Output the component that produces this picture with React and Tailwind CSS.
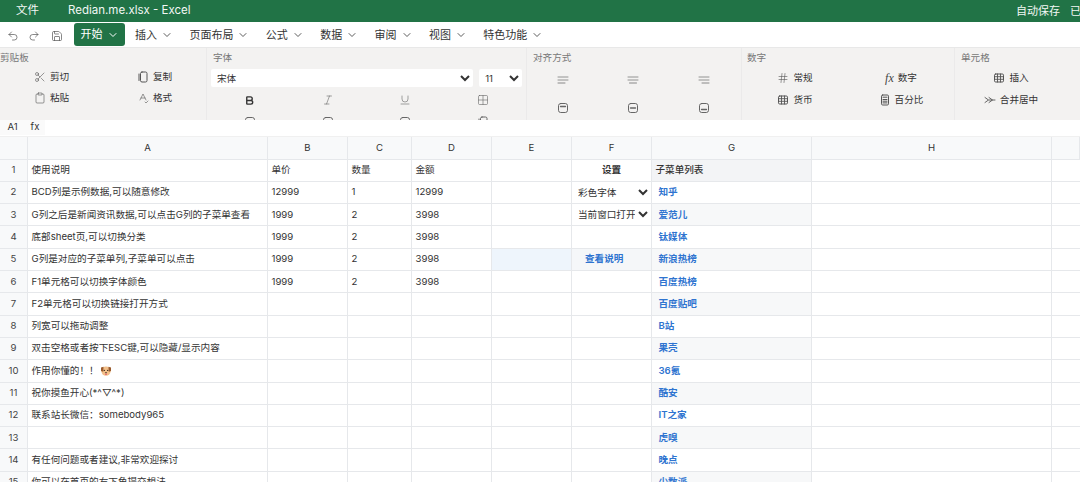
import React from 'react';
import {
  Undo2, Redo2, Save, ChevronDown, Scissors, Clipboard, Bold, Italic, Underline, Grid2x2,
  Hash, SpellCheck,
} from 'lucide-react';

const FONT = "font-['Inter','Noto_Sans_CJK_SC',sans-serif]";

const menus = ['插入', '页面布局', '公式', '数据', '审阅', '视图', '特色功能'];
const columns = ['A', 'B', 'C', 'D', 'E', 'F', 'G', 'H', ''];

const rows = [
  ['使用说明', '单价', '数量', '金额', '', '设置', '子菜单列表'],
  ['BCD列是示例数据,可以随意修改', '12999', '1', '12999', '', 'select1', '知乎'],
  ['G列之后是新闻资讯数据,可以点击G列的子菜单查看', '1999', '2', '3998', '', 'select2', '爱范儿'],
  ['底部sheet页,可以切换分类', '1999', '2', '3998', '', '', '钛媒体'],
  ['G列是对应的子菜单列,子菜单可以点击', '1999', '2', '3998', '', '查看说明', '新浪热榜'],
  ['F1单元格可以切换字体颜色', '1999', '2', '3998', '', '', '百度热榜'],
  ['F2单元格可以切换链接打开方式', '', '', '', '', '', '百度贴吧'],
  ['列宽可以拖动调整', '', '', '', '', '', 'B站'],
  ['双击空格或者按下ESC键,可以隐藏/显示内容', '', '', '', '', '', '果壳'],
  ['作用你懂的！！', '', '', '', '', '', '36氪'],
  ['祝你摸鱼开心(*^▽^*)', '', '', '', '', '', '酷安'],
  ['联系站长微信：somebody965', '', '', '', '', '', 'IT之家'],
  ['', '', '', '', '', '', '虎嗅'],
  ['有任何问题或者建议,非常欢迎探讨', '', '', '', '', '', '晚点'],
  ['你可以在首页的右下角提交想法', '', '', '', '', '', '少数派'],
];

const DogFace = () => (
  <svg width="12" height="12" viewBox="0 0 12 12" className="ml-[1px] inline-block align-[-2px]">
    <circle cx="6" cy="6.2" r="4.6" fill="#f3c08a" />
    <path d="M1 2.5 L3.6 1.8 L3.2 6.8 L1 6 Z M11 2.5 L8.4 1.8 L8.8 6.8 L11 6 Z" fill="#9a5a2c" />
    <circle cx="4.3" cy="5.4" r="0.7" fill="#3a2a20" />
    <circle cx="7.7" cy="5.4" r="0.7" fill="#3a2a20" />
    <path d="M4.8 7.2 H7.2 L6 8.4 Z" fill="#3a2a20" />
    <path d="M5.3 8.6 H6.7 V10 H5.3 Z" fill="#e0566a" />
  </svg>
);

const Svg = ({ children, size = 12 }) => (
  <svg width={size} height={size} viewBox="0 0 12 12" fill="none" stroke="currentColor" strokeWidth="1" strokeLinecap="round">
    {children}
  </svg>
);

const CopyIcon = () => (
  <Svg>
    <rect x="3.5" y="1" width="6.5" height="10" rx="1.5" />
    <path d="M2 3 V9.5" />
  </Svg>
);

const PasteIcon = () => <Clipboard size={12} strokeWidth={1.2} />;

const GridIcon = () => (
  <Svg>
    <rect x="1.5" y="2" width="9" height="8" rx="1.2" />
    <path d="M1.5 4.7 H10.5 M1.5 7.3 H10.5 M4.5 2 V10 M7.5 2 V10" strokeWidth="0.9" />
  </Svg>
);

const CalcIcon = () => (
  <Svg>
    <rect x="2.5" y="1" width="7" height="10" rx="1.2" />
    <path d="M4 3.2 H8 M4 5.5 H8 M4 7.2 H8 M4 8.9 H8" strokeWidth="1" />
  </Svg>
);

const MergeIcon = () => (
  <Svg>
    <path d="M1 3.5 L4.5 6 L1 8.5 M5 3.5 L8.5 6 L5 8.5 M5 6 H11" strokeWidth="0.9" />
  </Svg>
);

const FxIcon = () => (
  <span className="font-['Liberation_Serif',serif] text-[12px] italic leading-none text-[#444]">fx</span>
);

// three lines, pos picks the alignment
const AlignIcon = ({ pos }) => {
  const x = pos === 'left' ? 1 : pos === 'center' ? 2.5 : 4;
  return (
    <span className="text-[#888]">
      <Svg>
        <path d="M1 3 H11" strokeWidth="0.9" />
        <path d="M1 6 H11" strokeWidth="0.9" />
        <path d={`M${x} 9 H${x + 7}`} />
      </Svg>
    </span>
  );
};

const BoxIcon = ({ y }) => (
  <Svg>
    <rect x="1.5" y="1.5" width="9" height="9" rx="2.2" />
    <path d={`M3.5 ${y} H8.5`} strokeWidth="1.3" />
  </Svg>
);

const RibbonButton = ({ icon: Icon, label }) => (
  <div className="flex items-center justify-center gap-[4px] text-[9.6px] text-[#333]">
    <span className="flex items-center text-[#555]">
      <Icon />
    </span>
    <span>{label}</span>
  </div>
);

const RibbonIcon = ({ children }) => (
  <div className="flex items-center justify-center text-[#666]">{children}</div>
);

const Section = ({ title, width, children, last }) => (
  <div className={`flex shrink-0 flex-col ${width} ${last ? '' : 'border-r border-[#ebeaea]'}`}>
    <div className="h-[19px] pt-[3px] text-[9.6px] leading-[14px] text-[#777]">{title}</div>
    {children}
  </div>
);

const Cell = ({ value, row, col }) => {
  const base = 'flex items-center overflow-hidden whitespace-nowrap border-r border-b border-[#e6e8eb] text-[9.6px]';
  if (col === 5 && (value === 'select1' || value === 'select2')) {
    const label = value === 'select1' ? '彩色字体' : '当前窗口打开';
    return (
      <div className={base}>
        <select defaultValue={label} className="h-full w-full bg-white pl-[2px] text-[9.6px] text-[#333] outline-none">
          <option>{label}</option>
        </select>
      </div>
    );
  }
  if (col === 5 && row === 0) {
    return <div className={`${base} justify-center font-semibold text-[#333]`}>{value}</div>;
  }
  if (col === 5 && row === 4) {
    return <div className={`${base} bg-[#f5f7f9] pl-[13px] font-semibold text-[#2f74d0]`}>{value}</div>;
  }
  if (col === 6 && row === 0) {
    return <div className={`${base} bg-[#f3f4f6] px-[3.5px] font-medium text-[#333]`}>{value}</div>;
  }
  if (col === 6) {
    return (
      <div className={`${base} pl-[6.5px] font-semibold text-[#2f74d0] ${row % 2 === 0 ? 'bg-[#f7f8f9]' : 'bg-white'}`}>
        {value}
      </div>
    );
  }
  if (col === 4 && row === 4) {
    return <div className={`${base} bg-[#eef5fc]`} />;
  }
  return (
    <div className={`${base} px-[3.5px] text-[#333]`}>
      {value}
      {col === 0 && row === 9 && <DogFace />}
    </div>
  );
};

export default function App() {
  return (
    <div className={`${FONT} flex h-[482px] w-[1080px] flex-col overflow-hidden bg-white`}>
      {/* title bar */}
      <div className="flex h-[22px] shrink-0 items-center bg-[#217346] text-[11.5px] text-[#f2f7f4]">
        <span className="ml-[16px]">文件</span>
        <span className="ml-[29px]">Redian.me.xlsx - Excel</span>
        <span className="ml-auto text-[11px]">自动保存</span>
        <span className="ml-[10px] w-[10px] overflow-hidden whitespace-nowrap text-[11px]">已</span>
      </div>

      {/* menu bar */}
      <div className="flex h-[26px] shrink-0 items-center border-b border-[#e8e8e8] text-[11px] text-[#333]">
        <div className="flex w-[70px] items-center gap-[9px] pl-[7px] pt-[2px] text-[#555]">
          <Undo2 size={12} strokeWidth={1.4} />
          <Redo2 size={12} strokeWidth={1.4} />
          <Save size={12} strokeWidth={1.4} className="ml-[2px]" />
        </div>
        <div className="ml-[4px] flex h-[23px] w-[51px] items-center justify-center gap-[4px] rounded-[3px] bg-[#217346] text-white">
          开始 <ChevronDown size={12} />
        </div>
        <div className="ml-[10px] flex items-center gap-[16.4px] pt-[1px]">
          {menus.map((m) => (
            <div key={m} className="flex items-center gap-[4px]">
              {m} <ChevronDown size={12} strokeWidth={1.6} />
            </div>
          ))}
        </div>
      </div>

      {/* ribbon */}
      <div className="flex h-[72px] shrink-0 overflow-hidden bg-[#f3f2f1]">
        <Section title="剪贴板" width="w-[207px]">
          <div className="grid grid-cols-2 auto-rows-[20.5px]">
            <RibbonButton icon={() => <Scissors size={12} strokeWidth={1.2} />} label="剪切" />
            <RibbonButton icon={CopyIcon} label="复制" />
            <RibbonButton icon={PasteIcon} label="粘贴" />
            <RibbonButton icon={() => <SpellCheck size={12} strokeWidth={1.2} />} label="格式" />
          </div>
        </Section>
        <Section title="字体" width="w-[320px] px-[4px] [&>div:first-child]:pl-[2px]">
          <div className="mt-[4px] flex gap-[6px]">
            <select defaultValue="宋体" className="h-[18px] w-[263px] rounded-[2px] bg-white pl-[2px] text-[9.6px] text-[#333] outline-none">
              <option>宋体</option>
            </select>
            <select defaultValue="11" className="h-[18px] w-[43px] rounded-[2px] bg-white pl-[2px] text-[9.6px] text-[#333] outline-none">
              <option>11</option>
            </select>
          </div>
          <div className="mt-[2px] grid grid-cols-4 auto-rows-[22px]">
            <RibbonIcon><Bold size={11} strokeWidth={3} className="text-[#333]" /></RibbonIcon>
            <RibbonIcon><Italic size={12} strokeWidth={1.2} /></RibbonIcon>
            <RibbonIcon><Underline size={12} strokeWidth={1.2} /></RibbonIcon>
            <RibbonIcon><Grid2x2 size={12} strokeWidth={1.2} /></RibbonIcon>
            <RibbonIcon><BoxIcon y={6} /></RibbonIcon>
            <RibbonIcon><BoxIcon y={6} /></RibbonIcon>
            <RibbonIcon><BoxIcon y={6} /></RibbonIcon>
            <RibbonIcon><CopyIcon /></RibbonIcon>
          </div>
        </Section>
        <Section title="对齐方式" width="w-[215px] [&>div:first-child]:pl-[6px]">
          <div className="grid grid-cols-3 auto-rows-[28px] pt-[1px] pl-[1px] pr-[2px]">
            <RibbonIcon><AlignIcon pos="left" /></RibbonIcon>
            <RibbonIcon><AlignIcon pos="center" /></RibbonIcon>
            <RibbonIcon><AlignIcon pos="right" /></RibbonIcon>
            <RibbonIcon><BoxIcon y={4.5} /></RibbonIcon>
            <RibbonIcon><BoxIcon y={6} /></RibbonIcon>
            <RibbonIcon><BoxIcon y={7.5} /></RibbonIcon>
          </div>
        </Section>
        <Section title="数字" width="w-[213px] [&>div:first-child]:pl-[5px]">
          <div className="grid grid-cols-2 auto-rows-[22px]">
            <RibbonButton icon={() => <Hash size={12} strokeWidth={1.2} />} label="常规" />
            <RibbonButton icon={FxIcon} label="数字" />
            <RibbonButton icon={GridIcon} label="货币" />
            <RibbonButton icon={CalcIcon} label="百分比" />
          </div>
        </Section>
        <Section title="单元格" width="w-[112px] [&>div:first-child]:pl-[6px]" last>
          <div className="grid auto-rows-[22px]">
            <RibbonButton icon={GridIcon} label="插入" />
            <RibbonButton icon={MergeIcon} label="合并居中" />
          </div>
        </Section>
      </div>

      {/* formula bar */}
      <div className="flex h-[17px] shrink-0 items-center border-b border-[#f0f0f0] pb-px text-[9.6px] text-[#333]">
        <div className="flex h-full w-[25px] items-center justify-center bg-[#fafafa]">A1</div>
        <div className="flex h-full w-[20px] items-center justify-center bg-[#fafafa]">fx</div>
      </div>

      {/* sheet */}
      <div className="grid grid-cols-[28px_240px_80px_64px_80px_80px_80px_160px_240px_28px] grid-rows-[22.6px] auto-rows-[22.3px] overflow-hidden">
        <div className="border-r border-b border-[#e6e8eb] bg-[#f8f9fa]" />
        {columns.map((c, i) => (
          <div key={i} className="flex items-center justify-center border-r border-b border-[#e6e8eb] bg-[#f8f9fa] text-[9.6px] text-[#333]">
            {c}
          </div>
        ))}
        {rows.map((row, r) => (
          <React.Fragment key={r}>
            <div className="flex items-center justify-center border-r border-b border-[#e6e8eb] bg-[#f8f9fa] text-[9.6px] text-[#444]">
              {r + 1}
            </div>
            {row.map((value, c) => (
              <Cell key={c} value={value} row={r} col={c} />
            ))}
            <div className="border-r border-b border-[#e6e8eb]" />
            <div className="border-b border-[#e6e8eb]" />
          </React.Fragment>
        ))}
      </div>
    </div>
  );
}
